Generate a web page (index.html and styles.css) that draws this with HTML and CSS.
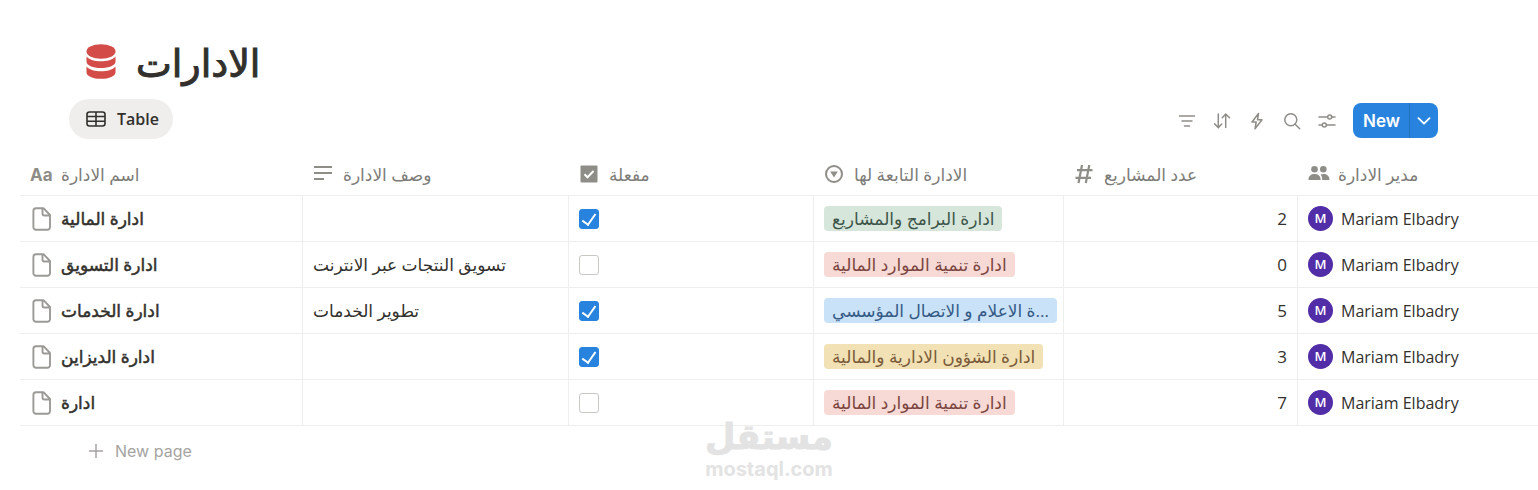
FILE: index.html
```html
<!DOCTYPE html>
<html lang="ar">

<head>
	<meta charset="UTF-8">
	<meta name="viewport" content="width=device-width, initial-scale=1">
	<title>الادارات</title>
	<link rel="stylesheet" href="styles.css">
</head>

<body>
	<!-- shared icons -->
	<svg class="defs" width="0" height="0">
		<symbol id="page" viewBox="0 0 20 24">
			<path d="M4 1.200h7.500L18 8v12.200a2.600 2.600 0 0 1-2.600 2.600H4a2.600 2.600 0 0 1-2.600-2.600V3.800A2.600 2.600 0 0 1 4 1.200zM10.500 1.500v5a2 2 0 0 0 2 2h5.300" fill="none" stroke="#9b9a97" stroke-width="1.900" stroke-linejoin="round" />
		</symbol>
	</svg>

	<header class="title">
		<svg width="30" height="36" viewBox="0 0 30 36" fill="#d44c47">
			<ellipse cx="15" cy="7.500" rx="14.500" ry="7.300" />
			<path d="M.5 12.500c3 3.500 8.500 4.800 14.500 4.800s11.500-1.300 14.500-4.800v5c0 4-6.500 6.500-14.500 6.500S.5 21.500.5 17.500z" />
			<path d="M.5 22.500c3 3.500 8.500 4.800 14.500 4.800s11.500-1.300 14.500-4.800v5.700c0 4-6.500 6.600-14.500 6.600S.5 32.200.5 28.200z" />
		</svg>
		<h1>الادارات</h1>
	</header>

	<nav class="toolbar">
		<button class="view">
			<svg width="20" height="16" viewBox="0 0 20 16" fill="none" stroke="#32302c" stroke-width="1.600">
				<rect x="1" y="1" width="18" height="14" rx="2.500" />
				<path d="M1 5.500h18M1 10.200h18M10 1v14" />
			</svg>
			Table
		</button>
		<div class="actions">
			<button class="icon" aria-label="Filter">
				<svg viewBox="0 0 18 18"><path d="M1.500 4h15M4 9h10M6.500 14h5" /></svg>
			</button>
			<button class="icon" aria-label="Sort">
				<svg viewBox="0 0 18 18"><path d="M5.300 2v13.500M1.500 11.800l3.800 3.800 3.500-3.600M12.700 15.500V2M9.200 5.800l3.500-3.800 3.800 3.800" /></svg>
			</button>
			<button class="icon" aria-label="Automations">
				<svg viewBox="0 0 18 18"><path d="M10.500 1.500L4 10h4.200l-1.200 6.800L14 7.800H9.500z" stroke-linejoin="round" /></svg>
			</button>
			<button class="icon" aria-label="Search">
				<svg viewBox="0 0 18 18"><circle cx="7.800" cy="7.800" r="6" /><path d="M12.200 12.200l4.500 4.500" /></svg>
			</button>
			<button class="icon" aria-label="Settings">
				<svg viewBox="0 0 18 18"><path d="M1 5h8.500M14 5h3M1 13h3M8.500 13H17" /><circle cx="11.700" cy="5" r="2" /><circle cx="6.300" cy="13" r="2" /></svg>
			</button>
			<div class="new">
				<button>New</button>
				<button class="more" aria-label="More">
					<svg width="14" height="8" viewBox="0 0 14 8"><path d="M1.500 1.200L7 6.700l5.500-5.500" fill="none" stroke="#fff" stroke-width="1.900" stroke-linecap="round" stroke-linejoin="round" /></svg>
				</button>
			</div>
		</div>
	</nav>

	<table>
		<colgroup>
			<col class="c-name">
			<col class="c-desc">
			<col class="c-active">
			<col class="c-parent">
			<col class="c-count">
			<col>
		</colgroup>
		<thead>
			<tr>
				<th>
					<div class="cell"><b class="aa">Aa</b><span>اسم الادارة</span></div>
				</th>
				<th>
					<div class="cell">
						<svg width="20" height="20" viewBox="0 0 20 20" stroke="#8e8d88" stroke-width="2"><path d="M1 2h18M1 8h18M1 14h10" /></svg>
						<span>وصف الادارة</span>
					</div>
				</th>
				<th>
					<div class="cell">
						<svg width="20" height="20" viewBox="0 0 20 20"><rect x="1.500" y=".5" width="17" height="17" rx="1" fill="#8e8d88" /><path d="M5.500 9.200l3 3 6-6.200" fill="none" stroke="#fff" stroke-width="2" /></svg>
						<span>مفعلة</span>
					</div>
				</th>
				<th>
					<div class="cell">
						<svg width="20" height="20" viewBox="0 0 20 20"><circle cx="10" cy="9" r="8" fill="none" stroke="#8e8d88" stroke-width="2" /><path d="M6.200 6.500h7.600L10 12.500z" fill="#8e8d88" /></svg>
						<span>الادارة التابعة لها</span>
					</div>
				</th>
				<th>
					<div class="cell">
						<svg width="20" height="20" viewBox="0 0 20 20" stroke="#8e8d88" stroke-width="2.200"><path d="M8 0L4.500 18M15.300 0l-3.500 18M3 5.200h15.500M1.500 12.800H17" /></svg>
						<span>عدد المشاريع</span>
					</div>
				</th>
				<th>
					<div class="cell people">
						<svg width="22" height="20" viewBox="0 0 22 20" fill="#8e8d88"><circle cx="6.500" cy="4.300" r="3.300" /><circle cx="15.300" cy="4.300" r="3.300" /><path d="M.5 15C.5 10.700 3 9 6.500 9s6.200 1.700 6.200 6zM12.500 9.500c4-1.300 9-.2 9 5.500h-7.300c0-2.500-.5-4.100-1.700-5.500z" /></svg>
						<span>مدير الادارة</span>
					</div>
				</th>
			</tr>
		</thead>
		<tbody>
			<tr>
				<td><div class="cell name"><svg width="20" height="24"><use href="#page" /></svg><span>ادارة المالية</span></div></td>
				<td></td>
				<td><input type="checkbox" aria-label="مفعلة" checked></td>
				<td><span class="tag green" dir="rtl">ادارة البرامج والمشاريع</span></td>
				<td class="num">2</td>
				<td><div class="cell person"><i>M</i>Mariam Elbadry</div></td>
			</tr>
			<tr>
				<td><div class="cell name"><svg width="20" height="24"><use href="#page" /></svg><span>ادارة التسويق</span></div></td>
				<td>تسويق النتجات عبر الانترنت</td>
				<td><input type="checkbox" aria-label="مفعلة"></td>
				<td><span class="tag red" dir="rtl">ادارة تنمية الموارد المالية</span></td>
				<td class="num">0</td>
				<td><div class="cell person"><i>M</i>Mariam Elbadry</div></td>
			</tr>
			<tr>
				<td><div class="cell name"><svg width="20" height="24"><use href="#page" /></svg><span>ادارة الخدمات</span></div></td>
				<td>تطوير الخدمات</td>
				<td><input type="checkbox" aria-label="مفعلة" checked></td>
				<td><span class="tag blue" dir="rtl">...ة الاعلام و الاتصال المؤسسي</span></td>
				<td class="num">5</td>
				<td><div class="cell person"><i>M</i>Mariam Elbadry</div></td>
			</tr>
			<tr>
				<td><div class="cell name"><svg width="20" height="24"><use href="#page" /></svg><span>ادارة الديزاين</span></div></td>
				<td></td>
				<td><input type="checkbox" aria-label="مفعلة" checked></td>
				<td><span class="tag yellow" dir="rtl">ادارة الشؤون الادارية والمالية</span></td>
				<td class="num">3</td>
				<td><div class="cell person"><i>M</i>Mariam Elbadry</div></td>
			</tr>
			<tr>
				<td><div class="cell name"><svg width="20" height="24"><use href="#page" /></svg><span>ادارة</span></div></td>
				<td></td>
				<td><input type="checkbox" aria-label="مفعلة"></td>
				<td><span class="tag red" dir="rtl">ادارة تنمية الموارد المالية</span></td>
				<td class="num">7</td>
				<td><div class="cell person"><i>M</i>Mariam Elbadry</div></td>
			</tr>
		</tbody>
	</table>

	<button class="add">
		<svg width="14" height="14" viewBox="0 0 14 14" stroke="#a5a4a1" stroke-width="1.500"><path d="M7 0v14M0 7h14" /></svg>
		New page
	</button>

	<div class="watermark">
		<div class="mark">مستقل</div>
		<div class="site">mostaql.com</div>
	</div>
</body>

</html>
```
FILE: styles.css
```css
* {
	box-sizing: border-box;
}

body {
	margin: 0;
	padding: 38px 0 0 20px;
	min-height: 100vh;
	position: relative;
	background: #fff;
	color: #32302c;
	font-family: "Open Sans", "DejaVu Sans", sans-serif;
	font-size: 17px;
}

button {
	border: 0;
	padding: 0;
	background: none;
	font: inherit;
	color: inherit;
	cursor: pointer;
}

svg {
	display: block;
	flex: none;
}

.defs {
	position: absolute;
}

.title {
	display: flex;
	align-items: center;
	gap: 20px;
	height: 48px;
	padding-left: 66px;
}

.title h1 {
	margin: 0;
	font-size: 38px;
	font-weight: 400;
	line-height: 48px;
	-webkit-text-stroke: 1px #32302c;
}

.toolbar {
	display: flex;
	align-items: center;
	justify-content: space-between;
	margin-top: 13px;
	padding: 0 100px 0 49px;
}

.view {
	display: flex;
	align-items: center;
	gap: 11px;
	height: 40px;
	padding: 0 14px 0 17px;
	border-radius: 20px;
	background: #efeeec;
	font-size: 16px;
	font-weight: 600;
}

.actions {
	display: flex;
	align-items: center;
	gap: 17px;
	padding-top: 3px;
}

.icon svg {
	width: 18px;
	height: 18px;
	fill: none;
	stroke: #8e8d88;
	stroke-width: 1.5;
	stroke-linecap: round;
}

.new {
	display: flex;
	height: 35px;
	border-radius: 8px;
	background: #2783de;
	color: #fff;
	font-family: Inter, sans-serif;
	font-weight: 600;
	overflow: hidden;
}

.new button {
	padding: 0 9px 0 10px;
}

.new .more {
	padding: 0 7px;
	border-left: 1px solid #2272c0;
}

table {
	width: 100%;
	margin-top: 15px;
	border-collapse: separate;
	border-spacing: 0;
	table-layout: fixed;
}

.c-name {
	width: 283px;
}

.c-desc {
	width: 266px;
}

.c-active {
	width: 245px;
}

.c-parent {
	width: 250px;
}

.c-count {
	width: 234px;
}

th,
td {
	height: 46px;
	padding: 0 10px;
	border-bottom: 1px solid #eeeeec;
	text-align: left;
	white-space: nowrap;
}

th {
	height: 42px;
	color: #7d7c78;
	font-weight: 400;
}

td {
	border-right: 1px solid #eeeeec;
}

td:last-child {
	border-right: 0;
}

.cell {
	display: flex;
	align-items: center;
	gap: 10px;
}

.aa {
	width: 22px;
	margin-right: -1px;
	font-family: Inter, sans-serif;
	font-weight: 700;
	color: #8e8d88;
}

.people {
	gap: 8px;
}

.name {
	padding-left: 2px;
	gap: 9px;
	-webkit-text-stroke: .5px #32302c;
}

td input {
	appearance: none;
	display: block;
	width: 20px;
	height: 20px;
	margin: 0;
	border: 1px solid #c9c8c5;
	border-radius: 3px;
}

td input:checked {
	border-color: #2783de;
	background: #2783de;
}

td input:checked::after {
	content: "";
	display: block;
	width: 6px;
	height: 12px;
	margin: 1px auto;
	border: solid #fff;
	border-width: 0 2px 2px 0;
	transform: rotate(35deg);
}

.tag {
	display: inline-block;
	height: 25px;
	padding: 0 8px;
	border-radius: 4px;
	line-height: 26px;
	vertical-align: middle;
}

.green {
	background: #d6e6db;
	color: #3d5549;
}

.red {
	background: #f7d9d5;
	color: #7a4540;
}

.blue {
	background: #cae2f7;
	color: #355a86;
}

.yellow {
	background: #f1e1b4;
	color: #7a5a3a;
}

.num {
	text-align: right;
}

.person {
	gap: 8px;
	font-size: 16px;
}

.person i {
	width: 25px;
	height: 25px;
	border-radius: 50%;
	background: #512da8;
	color: #fff;
	font-size: 13px;
	font-style: normal;
	font-weight: 600;
	line-height: 25px;
	text-align: center;
}

.add {
	display: flex;
	align-items: center;
	gap: 12px;
	height: 50px;
	padding-left: 69px;
	color: #a5a4a1;
	font-family: Inter, sans-serif;
	font-size: 16px;
}

/* sits over the bottom of the table */
.watermark {
	position: absolute;
	top: 415px;
	left: 0;
	right: 0;
	color: #e3e3e3;
	text-align: center;
	pointer-events: none;
}

.mark {
	font-size: 35px;
	font-weight: 700;
	line-height: 42px;
	-webkit-text-stroke: 1px #e3e3e3;
}

.site {
	font-family: Inter, sans-serif;
	font-size: 20px;
	font-weight: 700;
	line-height: 24px;
}
```
